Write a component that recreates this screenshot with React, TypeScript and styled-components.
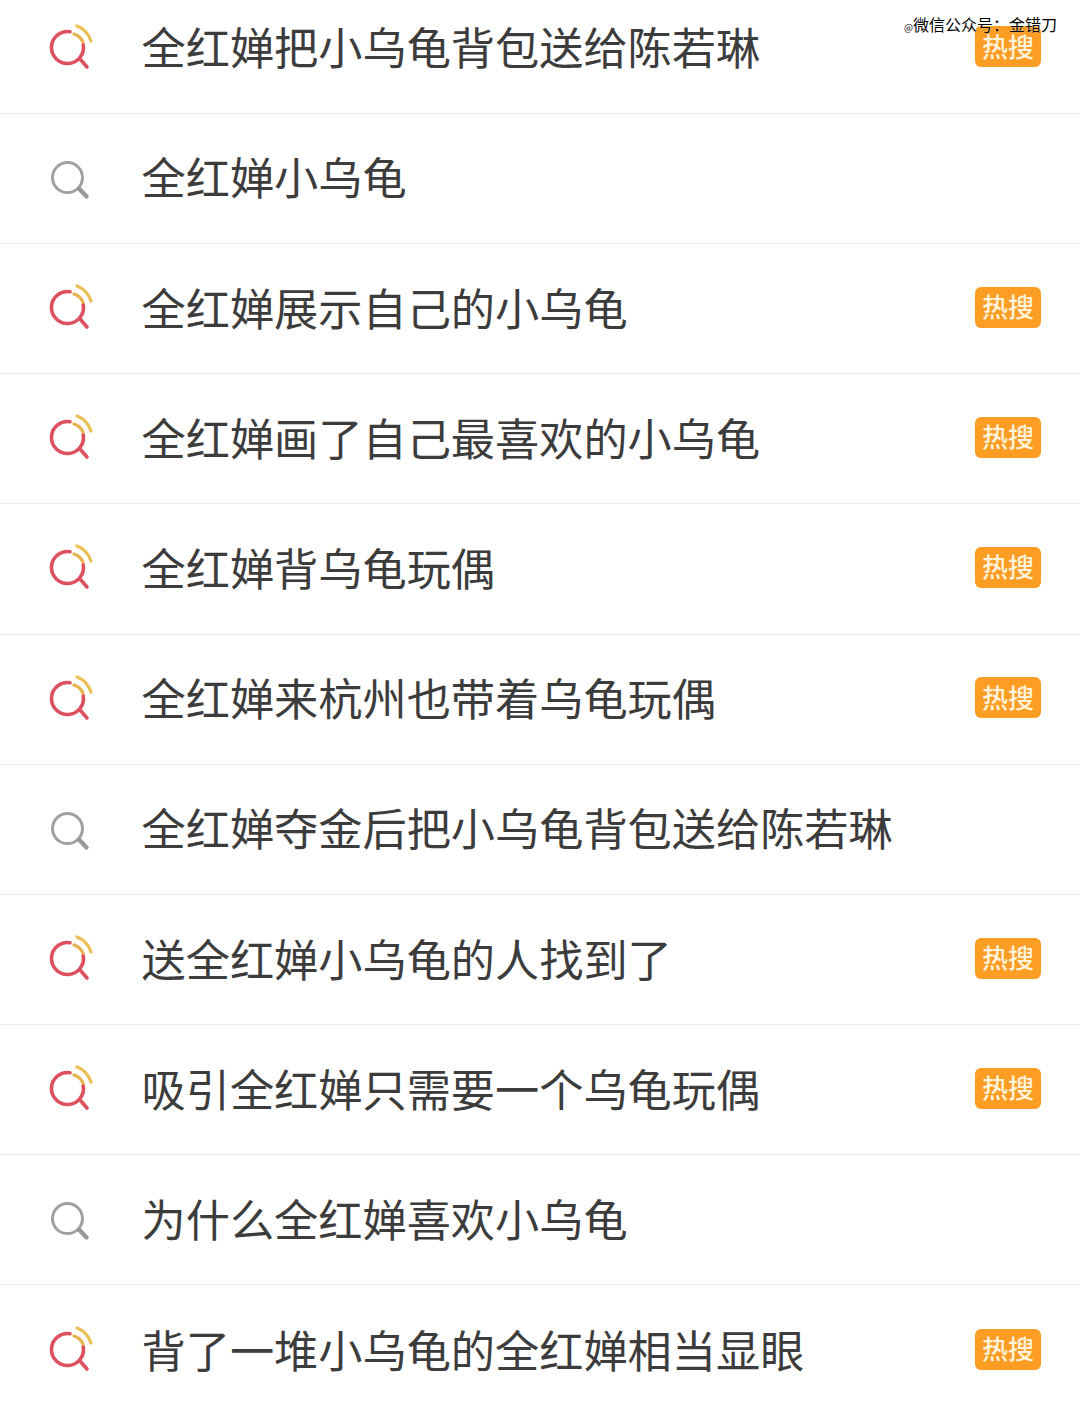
import styled, { createGlobalStyle } from 'styled-components';

const GlobalStyle = createGlobalStyle`
  html, body {
    margin: 0;
    padding: 0;
    background: #fff;
    overflow: hidden;
  }
`;

const Page = styled.div`
  position: relative;
  width: 1080px;
  height: 1408px;
  overflow: hidden;
  background: #fff;
  font-family: "Noto Sans CJK SC", "Noto Sans", sans-serif;
`;

const List = styled.ul`
  list-style: none;
  margin: 0;
  padding: 0;
`;

const Row = styled.li<{ $first?: boolean }>`
  display: flex;
  align-items: center;
  box-sizing: border-box;
  height: ${(p) => (p.$first ? '113.8px' : '130.2px')};
  padding: ${(p) => (p.$first ? '0 39px 19px 48px' : '0 39px 3px 48px')};
  border-bottom: 1px solid #ebebeb;
  &:last-child {
    border-bottom: none;
  }
`;

const IconBox = styled.span`
  display: flex;
  flex: none;
  width: 44px;
  height: 44px;
  margin-right: 49.5px;
`;

const Title = styled.span`
  flex: 1;
  margin-bottom: 1px;
  font-size: 44.2px;
  line-height: 60px;
  font-weight: 400;
  color: #3c3c3c;
  white-space: nowrap;
`;

const HotBadge = styled.span`
  display: flex;
  align-items: center;
  justify-content: center;
  flex: none;
  width: 66px;
  height: 41px;
  padding-bottom: 2px;
  box-sizing: border-box;
  border-radius: 6px;
  background: #fd9d24;
  color: #fff3dc;
  font-size: 26px;
  font-weight: 500;
  line-height: 1;
`;

const Watermark = styled.div`
  position: absolute;
  top: 14px;
  left: 904px;
  font-size: 16px;
  line-height: 20px;
  color: #000;
  white-space: nowrap;
  text-shadow: 0 0 1px #fff;
`;

const At = styled.span`
  font-size: 9.5px;
`;

const Svg = styled.svg`
  overflow: visible;
`;

function HotIcon() {
  return (
    <Svg width="44" height="44" viewBox="0 0 44 44" fill="none" strokeLinecap="round">
      <path d="M22 6.7A16 16 0 1 0 35.2 19.5" stroke="#dc5060" strokeWidth="3.6" />
      <path d="M32 34L39 42" stroke="#dc5060" strokeWidth="3.6" />
      <path d="M29 1C35 3 41 9 43 16" stroke="#eabf55" strokeWidth="3.2" />
      <path d="M26 9C30 10 33 13 35 17" stroke="#e6b24c" strokeWidth="3.2" />
    </Svg>
  );
}

function PlainIcon() {
  return (
    <Svg width="44" height="44" viewBox="0 0 44 44" fill="none" strokeLinecap="round">
      <circle cx="19.5" cy="22.6" r="15" stroke="#a0a0a0" strokeWidth="3" />
      <path d="M31 33.5L38.5 41.5" stroke="#989898" strokeWidth="4.4" />
    </Svg>
  );
}

const rows = [
  { text: '全红婵把小乌龟背包送给陈若琳', hot: true },
  { text: '全红婵小乌龟', hot: false },
  { text: '全红婵展示自己的小乌龟', hot: true },
  { text: '全红婵画了自己最喜欢的小乌龟', hot: true },
  { text: '全红婵背乌龟玩偶', hot: true },
  { text: '全红婵来杭州也带着乌龟玩偶', hot: true },
  { text: '全红婵夺金后把小乌龟背包送给陈若琳', hot: false },
  { text: '送全红婵小乌龟的人找到了', hot: true },
  { text: '吸引全红婵只需要一个乌龟玩偶', hot: true },
  { text: '为什么全红婵喜欢小乌龟', hot: false },
  { text: '背了一堆小乌龟的全红婵相当显眼', hot: true },
];

export default function App() {
  return (
    <Page>
      <GlobalStyle />
      <List>
        {rows.map((row, i) => (
          <Row key={row.text} $first={i === 0}>
            <IconBox>{row.hot ? <HotIcon /> : <PlainIcon />}</IconBox>
            <Title>{row.text}</Title>
            {row.hot && <HotBadge>热搜</HotBadge>}
          </Row>
        ))}
      </List>
      <Watermark><At>@</At>微信公众号：金错刀</Watermark>
    </Page>
  );
}
